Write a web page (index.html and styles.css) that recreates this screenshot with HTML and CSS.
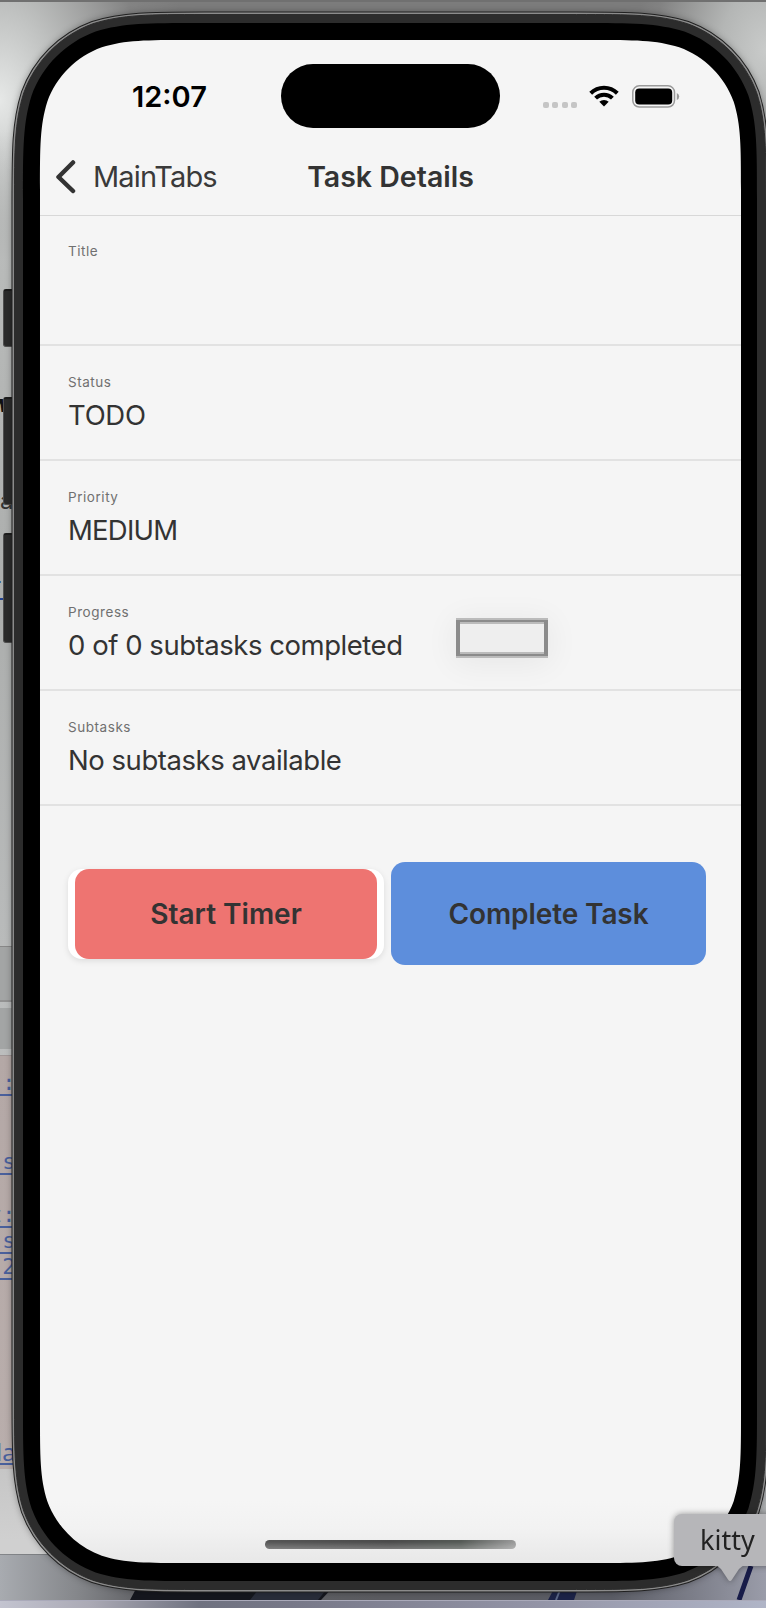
FILE: index.html
```html
<!DOCTYPE html>
<html lang="en">
<head>
<meta charset="utf-8">
<title>Task Details</title>
<link rel="stylesheet" href="styles.css">
</head>
<body>
<main class="desktop">
  <div class="backdrop" aria-hidden="true">
    <div class="glow glow-left"></div>
    <div class="glow glow-right"></div>
    <div class="menu-edge"></div>
    <div class="pane pane-a"></div>
    <div class="pane pane-b"></div>
    <div class="diff"></div>
    <span class="frag dark" style="top:391px;left:-10px">w</span>
    <span class="frag dim" style="top:488px;left:0">a</span>
    <span class="frag ink" style="top:573px;left:-8px">r</span>
    <span class="frag link" style="top:1069px">.:</span>
    <span class="frag link" style="top:1148px">&nbsp;s</span>
    <span class="frag link" style="top:1201px">t:</span>
    <span class="frag link" style="top:1227px">&nbsp;s</span>
    <span class="frag link" style="top:1253px">-2</span>
    <span class="frag link sans" style="top:1438px">la</span>
    <svg class="wallpaper" width="766" height="54" viewBox="0 1554 766 54">
      <defs>
        <linearGradient id="wall" x1="0" x2="1" y1="0" y2="0"><stop offset="0" stop-color="#a8abb0"/><stop offset=".1" stop-color="#85878b"/><stop offset=".18" stop-color="#626367"/><stop offset=".5" stop-color="#5b5c61"/><stop offset=".8" stop-color="#5b5d66"/><stop offset="1" stop-color="#9a9ca9"/></linearGradient>
        <linearGradient id="dock" x1="0" x2="1" y1="0" y2="0"><stop offset="0" stop-color="#c3c4d0"/><stop offset=".12" stop-color="#aaa9b4"/><stop offset=".26" stop-color="#6f7280"/><stop offset=".38" stop-color="#777888"/><stop offset=".7" stop-color="#9394a6"/><stop offset="1" stop-color="#b0b5c7"/></linearGradient>
      </defs>
      <path d="M0 1554h766v46H0z" fill="url(#wall)"/>
      <path d="M0 1554h60" stroke="#606265"/>
      <path d="M138 1585h197l-14 15H130z" fill="#15171e"/>
      <path d="M262 1585h68l-12 15h-68z" fill="#292d3a"/>
      <path d="M556 1585l-8 15h26l5-15z" fill="#1c2348"/>
      <path d="M562 1585l-6 15" stroke="#5b6787" stroke-width="2"/>
      <path d="M751 1566l-12 34" stroke="#171b48" stroke-width="5"/>
      <path d="M0 1600h766v8H0z" fill="url(#dock)"/>
      <path d="M0 1600.5h766" stroke="#aaaaba"/>
    </svg>
    <i class="key" style="top:289px;height:58px"></i>
    <i class="key" style="top:397px;height:108px"></i>
    <i class="key" style="top:533px;height:110px"></i>
  </div>

  <svg class="phone-frame" width="766" height="1608" viewBox="0 0 766 1608" aria-hidden="true">
    <defs>
      <path id="case" d="M576.5 14.5c54.6 0 81.9 0 111.2 9.3c32.1 11.7 57.3 36.9 69 69c9.3 29.4 9.3 56.7 9.3 111.2V1400c0 54.6 0 81.9-9.3 111.2c-11.7 32.1-36.9 57.3-69 69c-29.4 9.3-56.7 9.3-111.2 9.3H204c-54.6 0-81.9 0-111.2-9.3c-32.1-11.7-57.3-36.9-69-69c-9.3-29.4-9.3-56.7-9.3-111.2V204c0-54.6 0-81.9 9.3-111.2c11.7-32.1 36.9-57.3 69-69c29.4-9.3 56.7-9.3 111.2-9.3z"/>
      <linearGradient id="bottomShade" gradientUnits="userSpaceOnUse" x1="0" x2="0" y1="1500" y2="1563"><stop offset="0" stop-color="#f5f5f5"/><stop offset=".45" stop-color="#f2f2f2"/><stop offset="1" stop-color="#e8e8e8"/></linearGradient>
    </defs>
    <use href="#case" stroke="#202020" stroke-width="6"/>
    <use href="#case" stroke="#8b8b8b" stroke-width="4"/>
    <use href="#case" fill="#2c2c2c" stroke="#2c2c2c" stroke-width="1"/>
    <path d="M581.2 23c50.6 0 75.9 0 103.2 8.6c29.7 10.8 53.2 34.3 64 64c8.6 27.2 8.6 52.6 8.6 103.2V1405.2c0 50.6 0 75.9-8.6 103.2c-10.8 29.7-34.3 53.2-64 64c-27.2 8.6-52.6 8.6-103.2 8.6H198.8c-50.6 0-75.9 0-103.2-8.6c-29.7-10.8-53.2-34.3-64-64c-8.6-27.2-8.6-52.6-8.6-103.2V198.8c0-50.6 0-75.9 8.6-103.2c10.8-29.7 34.3-53.2 64-64c27.2-8.6 52.6-8.6 103.2-8.6z"/>
    <path fill="url(#bottomShade)" d="M591.3 40c43.1 0 64.7 0 87.9 7.3c25.3 9.2 45.3 29.2 54.5 54.5c7.3 23.2 7.3 44.8 7.3 87.9V1413.3c0 43.1 0 64.7-7.3 87.9c-9.2 25.3-29.2 45.3-54.5 54.5c-23.2 7.3-44.8 7.3-87.9 7.3H189.7c-43.1 0-64.7 0-87.9-7.3c-25.3-9.2-45.3-29.2-54.5-54.5c-7.3-23.2-7.3-44.8-7.3-87.9V189.7c0-43.1 0-64.7 7.3-87.9c9.2-25.3 29.2-45.3 54.5-54.5c23.2-7.3 44.8-7.3 87.9-7.3z"/>
  </svg>

  <section class="screen">
    <div class="status-bar">
      <span class="clock">12:07</span>
      <span class="island"></span>
      <span class="indicators">
        <span class="dots"><i></i><i></i><i></i><i></i></span>
        <svg class="wifi" width="30" height="22" viewBox="0 0 30 22"><g fill="none" stroke="#000" stroke-width="4"><path d="M1.700 8.200a19 19 0 0 1 26.600 0"/><path d="M6.600 13.100a12 12 0 0 1 16.800 0"/></g><path d="M15 21.500l-4.700-4.700a6.800 6.800 0 0 1 9.400 0z"/></svg>
        <svg class="battery" width="48" height="23" viewBox="0 0 48 23"><rect x=".8" y=".8" width="41.700" height="21.200" rx="6.500" fill="none" stroke="#9a9a9a" stroke-width="1.500"/><rect x="3.200" y="3.400" width="37" height="16" rx="4"/><path d="M44.800 8v7q2.400-1 2.400-3.500T44.800 8z" fill="#999"/></svg>
      </span>
    </div>
    <header class="nav">
      <a class="back"><svg width="20" height="34" viewBox="0 0 20 34"><path d="M17 2.500L2.500 17 17 31" fill="none" stroke="#333" stroke-width="4.500" stroke-linecap="round" stroke-linejoin="round"/></svg><span class="back-label">MainTabs</span></a>
      <h1 class="nav-title"><span>Task Details</span></h1>
    </header>
    <div class="row row-title"><span class="label">Title</span></div>
    <div class="row"><span class="label">Status</span><span class="value v-status">TODO</span></div>
    <div class="row"><span class="label">Priority</span><span class="value v-priority">MEDIUM</span></div>
    <div class="row"><span class="label">Progress</span><span class="value v-progress">0 of 0 subtasks completed</span><span class="selection"></span></div>
    <div class="row"><span class="label">Subtasks</span><span class="value v-subtasks">No subtasks available</span></div>
    <div class="actions">
      <div class="timer-card"><button class="btn btn-timer"><span>Start Timer</span></button></div>
      <button class="btn btn-complete"><span>Complete Task</span></button>
    </div>
    <div class="home-bar"></div>
  </section>

  <div class="tooltip">kitty<svg width="32" height="17" viewBox="0 0 32 17"><path d="M0 0q4 .5 7 4l7 10.500q2 3 4 0L25 4q3-3.500 7-4z" fill="#b6b6b9"/></svg></div>
</main>
</body>
</html>
```

FILE: styles.css
```css
* { box-sizing: border-box; }
body { margin: 0; font-family: Inter, "Liberation Sans", sans-serif; color: #333; }
.desktop { position: relative; width: 766px; height: 1608px; overflow: hidden; }
.backdrop { position: absolute; inset: 0; background: linear-gradient(#b9bbba 0, #b9bbba 250px, #acaead 600px, #b9bbbb 946px, #c6c6c6 1470px, #d0d0d0 1540px); }
.glow { position: absolute; top: 0; width: 383px; height: 260px; }
.glow-left { left: 0; background: linear-gradient(transparent 50%, #b9bbba), radial-gradient(ellipse 190px 300px at 0 100px, #e6e8e7 0, #c0c2c1 30%, #838383 75%, #7c7c7c 100%); }
.glow-right { right: 0; background: radial-gradient(ellipse 130px 180px at 100% 50px, #c9cbca 0, #b4b6b5 35%, #828282 85%, #7c7c7c 100%); }
.menu-edge { position: absolute; top: 0; left: 0; right: 0; height: 2px; background: #707070; }
.backdrop::after { content: ""; position: absolute; right: 0; top: 1480px; width: 60px; height: 74px; background: #aeb0b2; }
.pane { position: absolute; left: 0; width: 14px; background: #a3a5a5; }
.pane-a { top: 946px; height: 56px; border-top: 1px solid #888; border-bottom: 2px solid #929292; }
.pane-b { top: 1008px; height: 41px; }
.diff { position: absolute; left: 0; top: 1055px; width: 16px; height: 414px; background: linear-gradient(#b4a8a6, #b9aeac); border-top: 1px solid #a09797; }
.frag { position: absolute; font-size: 24px; line-height: 26px; white-space: pre; }
.dark { color: #111; font-style: italic; font-weight: 700; }
.dim { color: #333; }
.ink { color: #234390; width: 13px; height: 27px; border-bottom: 2px solid #234390; }
.link { left: -11px; width: 26px; height: 27px; color: #4a609c; border-bottom: 2px solid #4a609c; font: 22px/28px "DejaVu Sans Mono", monospace; }
.sans { left: -4px; width: 22px; font: 24px/28px "Noto Sans", sans-serif; }
.key { position: absolute; left: 3px; width: 12px; background: #2b2b2b; border: 1px solid #505050; border-top: 2px solid #1c1c1c; border-radius: 3px 0 0 3px; }
.wallpaper { position: absolute; left: 0; bottom: 0; }
.phone-frame { position: absolute; left: 0; top: 0; fill: #000; filter: drop-shadow(0 0 3px rgba(0,0,0,.3)); }

.screen { position: relative; display: flex; flex-direction: column; width: 701px; height: 1523px; margin: 0 0 0 40px; top: 40px; }
.status-bar { height: 97px; flex: none; display: grid; grid-template-columns: 241px 219px 1fr; padding-top: 24px; }
.clock { padding-left: 92px; font-size: 29px; line-height: 66px; font-weight: 600; color: #000; letter-spacing: 0; }
.island { height: 64px; background: #000; border-radius: 32px; }
.indicators { display: flex; padding: 21px 0 0 43px; height: 64px; }
.dots { display: flex; gap: 3.300px; padding-top: 17px; width: 46px; }
.dots i { width: 6px; height: 6px; border-radius: 2px; background: #c5c5c5; }
.wifi { margin-right: 13px; }
.nav { position: relative; height: 79px; flex: none; display: flex; align-items: center; border-bottom: 1px solid #d8d8d8; padding: 1px 0 0 16px; }
.back { display: flex; align-items: center; gap: 17px; color: #3a3a3a; font-size: 29px; }
.back-label { letter-spacing: -.85px; }
.nav-title { position: absolute; left: 0; right: 0; margin: 0; padding-bottom: 1px; text-align: center; font-size: 28.500px; font-weight: 600; letter-spacing: 0; }
.row { position: relative; flex: none; height: 115px; border-bottom: 2px solid #e2e2e2; padding: 27px 28px 0; display: flex; flex-direction: column; }
.row-title { height: 130px; padding-top: 26px; }
.label { font-size: 13.500px; line-height: 19px; color: #707070; letter-spacing: .55px; }
.value { font-size: 27.500px; line-height: 42px; margin-top: 2px; white-space: nowrap; letter-spacing: -.46px; }
.v-status { letter-spacing: -.3px; }
.v-priority { letter-spacing: -.75px; }
.selection { position: absolute; left: 416px; top: 42px; width: 92px; height: 40px; border: solid #bbb; border-width: 2px 0; background: linear-gradient(#eee, #eee) padding-box; box-shadow: 0 4px 32px 2px rgba(0,0,0,.06); }
.selection::before { content: ""; position: absolute; inset: 0; border: solid #8b8b8b; border-width: 2px 4px; }
.selection::after { content: ""; position: absolute; inset: 2px 4px; border: solid #bbb; border-width: 2px 0; }
.actions { display: flex; align-items: center; gap: 7px; padding: 56px 34px 0 28px; }
.timer-card { width: 316px; height: 90px; padding: 0 7px; border-radius: 14px; background: #fff; box-shadow: 0 2px 6px rgba(0,0,0,.1); display: flex; }
.btn { border: 0; font: 600 28px Inter, sans-serif; color: #333; border-radius: 14px; padding: 0; letter-spacing: 0; }
.btn-timer { width: 100%; background: #ee7471; }
.btn-complete { width: 315px; height: 103px; background: #5d8edc; letter-spacing: -.1px; }
.home-bar { width: 251px; height: 9px; margin: auto auto 14px 225px; border-radius: 5px; background: linear-gradient(rgba(255,255,255,0) 20%, rgba(255,255,255,.25)), linear-gradient(90deg, #555 0, #4b4b4b 50%, #555a56 78%, #9a9a9a 100%); }

.tooltip { position: absolute; left: 674px; top: 1514px; width: 110px; height: 52px; padding-left: 26px; border-radius: 8px; background: #b6b6b9; color: #222; font: 27px/51px "Noto Sans", sans-serif; filter: drop-shadow(0 0 3px rgba(0,0,0,.4)); }
.tooltip svg { position: absolute; left: 40px; top: 51px; }
```
